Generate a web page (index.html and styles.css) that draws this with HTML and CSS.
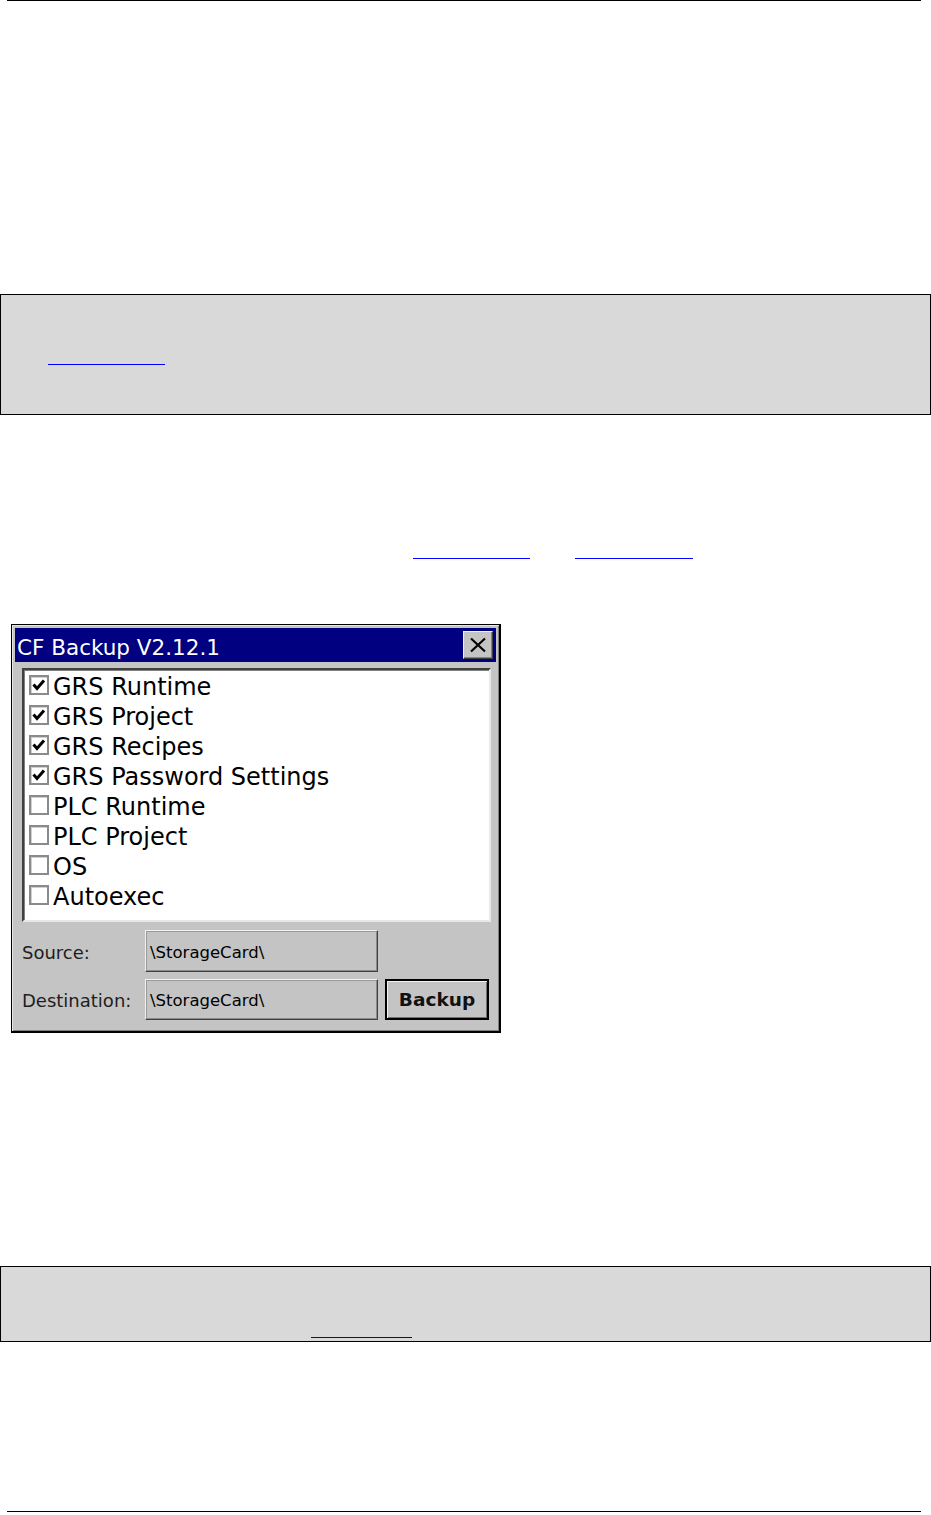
FILE: index.html
```html
<!DOCTYPE html>
<html>
<head>
<meta charset="utf-8">
<link rel="stylesheet" href="styles.css">
</head>
<body>
<div class="page">
  <div class="rule rule-top"></div>

  <div class="note note-1">
    <span class="link link-a"></span>
  </div>

  <div class="para-links">
    <span class="link link-b"></span>
    <span class="link link-c"></span>
  </div>

  <div class="win">
    <div class="titlebar">
      <span class="title">CF Backup V2.12.1</span>
      <span class="close">
        <svg width="18" height="16" viewBox="0 0 18 16"><path d="M2 1.5 L16 14.5 M16 1.5 L2 14.5" stroke="#000" stroke-width="2.2" fill="none"/></svg>
      </span>
    </div>
    <div class="winbody">
      <div class="list">
        <div class="item"><span class="cb"><svg width="16" height="16" viewBox="0 0 16 16"><path d="M2.5 7.5 L6 11.5 L13 3.5" stroke="#000" stroke-width="3" fill="none"/></svg></span><span class="lbl">GRS Runtime</span></div>
        <div class="item"><span class="cb"><svg width="16" height="16" viewBox="0 0 16 16"><path d="M2.5 7.5 L6 11.5 L13 3.5" stroke="#000" stroke-width="3" fill="none"/></svg></span><span class="lbl">GRS Project</span></div>
        <div class="item"><span class="cb"><svg width="16" height="16" viewBox="0 0 16 16"><path d="M2.5 7.5 L6 11.5 L13 3.5" stroke="#000" stroke-width="3" fill="none"/></svg></span><span class="lbl">GRS Recipes</span></div>
        <div class="item"><span class="cb"><svg width="16" height="16" viewBox="0 0 16 16"><path d="M2.5 7.5 L6 11.5 L13 3.5" stroke="#000" stroke-width="3" fill="none"/></svg></span><span class="lbl">GRS Password Settings</span></div>
        <div class="item"><span class="cb"></span><span class="lbl">PLC Runtime</span></div>
        <div class="item"><span class="cb"></span><span class="lbl">PLC Project</span></div>
        <div class="item"><span class="cb"></span><span class="lbl">OS</span></div>
        <div class="item"><span class="cb"></span><span class="lbl">Autoexec</span></div>
      </div>
      <div class="row row-src">
        <span class="flabel">Source:</span>
        <span class="field">\StorageCard\</span>
      </div>
      <div class="row row-dst">
        <span class="flabel">Destination:</span>
        <span class="field">\StorageCard\</span>
        <span class="btn">Backup</span>
      </div>
    </div>
  </div>

  <div class="note note-2">
    <span class="link link-d"></span>
  </div>

  <div class="rule rule-bottom"></div>
</div>
</body>
</html>
```

FILE: styles.css
```css
html, body {
  margin: 0;
  padding: 0;
  background: #fff;
}

.page {
  width: 931px;
  height: 1515px;
  overflow: hidden;
  font-family: "DejaVu Sans", Verdana, sans-serif;
}

.rule {
  height: 1px;
  background: #000;
  margin: 0 10px 0 7px;
}

.rule-bottom {
  margin-top: 169px;
}

.note {
  background: #d9d9d9;
  border: 1px solid #000;
  box-sizing: border-box;
  width: 931px;
}

.note-1 {
  margin-top: 293px;
  height: 121px;
  padding-top: 69px;
  padding-left: 47px;
}

.note-2 {
  margin-top: 233px;
  height: 76px;
  padding-top: 70px;
  padding-left: 310px;
}

.link {
  display: block;
  height: 1px;
  background: #0000ff;
}

.link-a { width: 117px; }
.link-d { width: 101px; background: #0000c8; }

.para-links {
  display: flex;
  gap: 45px;
  margin-top: 143px;
  padding-left: 413px;
}

.link-b { width: 117px; }
.link-c { width: 118px; }

/* ---- dialog ---- */
.win {
  margin-top: 65px;
  margin-left: 11px;
  width: 490px;
  box-sizing: border-box;
  border: 1px solid #000;
  border-right-width: 2px;
  border-bottom-width: 2px;
  background: #c4c4c4;
  box-shadow: inset 1px 1px 0 #e6e6e6, inset -1px -1px 0 #808080;
  padding: 3px 3px 11px 3px;
}

.titlebar {
  height: 34px;
  background: #000080;
  display: flex;
  align-items: center;
  justify-content: space-between;
  padding-left: 2px;
  padding-right: 3px;
  box-sizing: border-box;
}

.title {
  color: #fff;
  font-size: 21.5px;
  line-height: 34px;
  position: relative;
  top: 3px;
}

.close {
  width: 30px;
  height: 28px;
  box-sizing: border-box;
  background: #c4c4c4;
  border: 1px solid;
  border-color: #f0f0f0 #404040 #404040 #f0f0f0;
  box-shadow: inset -1px -1px 0 #808080;
  display: flex;
  align-items: center;
  justify-content: center;
}

.winbody {
  padding: 6px 5px 0 7px;
}

.list {
  height: 254px;
  box-sizing: border-box;
  background: #fff;
  border: 2px solid;
  border-color: #404040 #e8e8e8 #e8e8e8 #404040;
  box-shadow: inset 1px 1px 0 #808080;
  padding-left: 5px;
}

.item {
  height: 30px;
  display: flex;
  align-items: center;
  gap: 4px;
}

.cb {
  width: 20px;
  height: 20px;
  box-sizing: border-box;
  border: 2px solid #8a8a8a;
  background: #fff;
  box-shadow: inset 1px 1px 0 #d0d0d0;
  display: flex;
  align-items: center;
  justify-content: center;
  flex: none;
}

.lbl {
  font-size: 24px;
  color: #000;
  line-height: 30px;
  position: relative;
  top: 2px;
}

.row {
  display: flex;
  align-items: center;
}

.row-src {
  margin-top: 8px;
  height: 42px;
}

.row-dst {
  margin-top: 7px;
  height: 41px;
}

.flabel {
  width: 123px;
  font-size: 18px;
  color: #1e1e1e;
  position: relative;
  top: 1px;
}

.field {
  width: 233px;
  height: 100%;
  box-sizing: border-box;
  background: #c4c4c4;
  border: 1px solid;
  border-color: #f2f2f2 #404040 #404040 #f2f2f2;
  box-shadow: inset -1px -1px 0 #8a8a8a, inset 1px 1px 0 #9a9a9a;
  font-size: 16.5px;
  color: #000;
  display: flex;
  align-items: center;
  padding-left: 4px;
  padding-top: 2px;
}

.btn {
  margin-left: 7px;
  width: 104px;
  height: 100%;
  box-sizing: border-box;
  border: 2px solid #000;
  background: #c4c4c4;
  box-shadow: inset 1px 1px 0 #f2f2f2, inset -1px -1px 0 #707070;
  font-size: 18.5px;
  font-weight: bold;
  color: #111;
  display: flex;
  align-items: center;
  justify-content: center;
}
```
